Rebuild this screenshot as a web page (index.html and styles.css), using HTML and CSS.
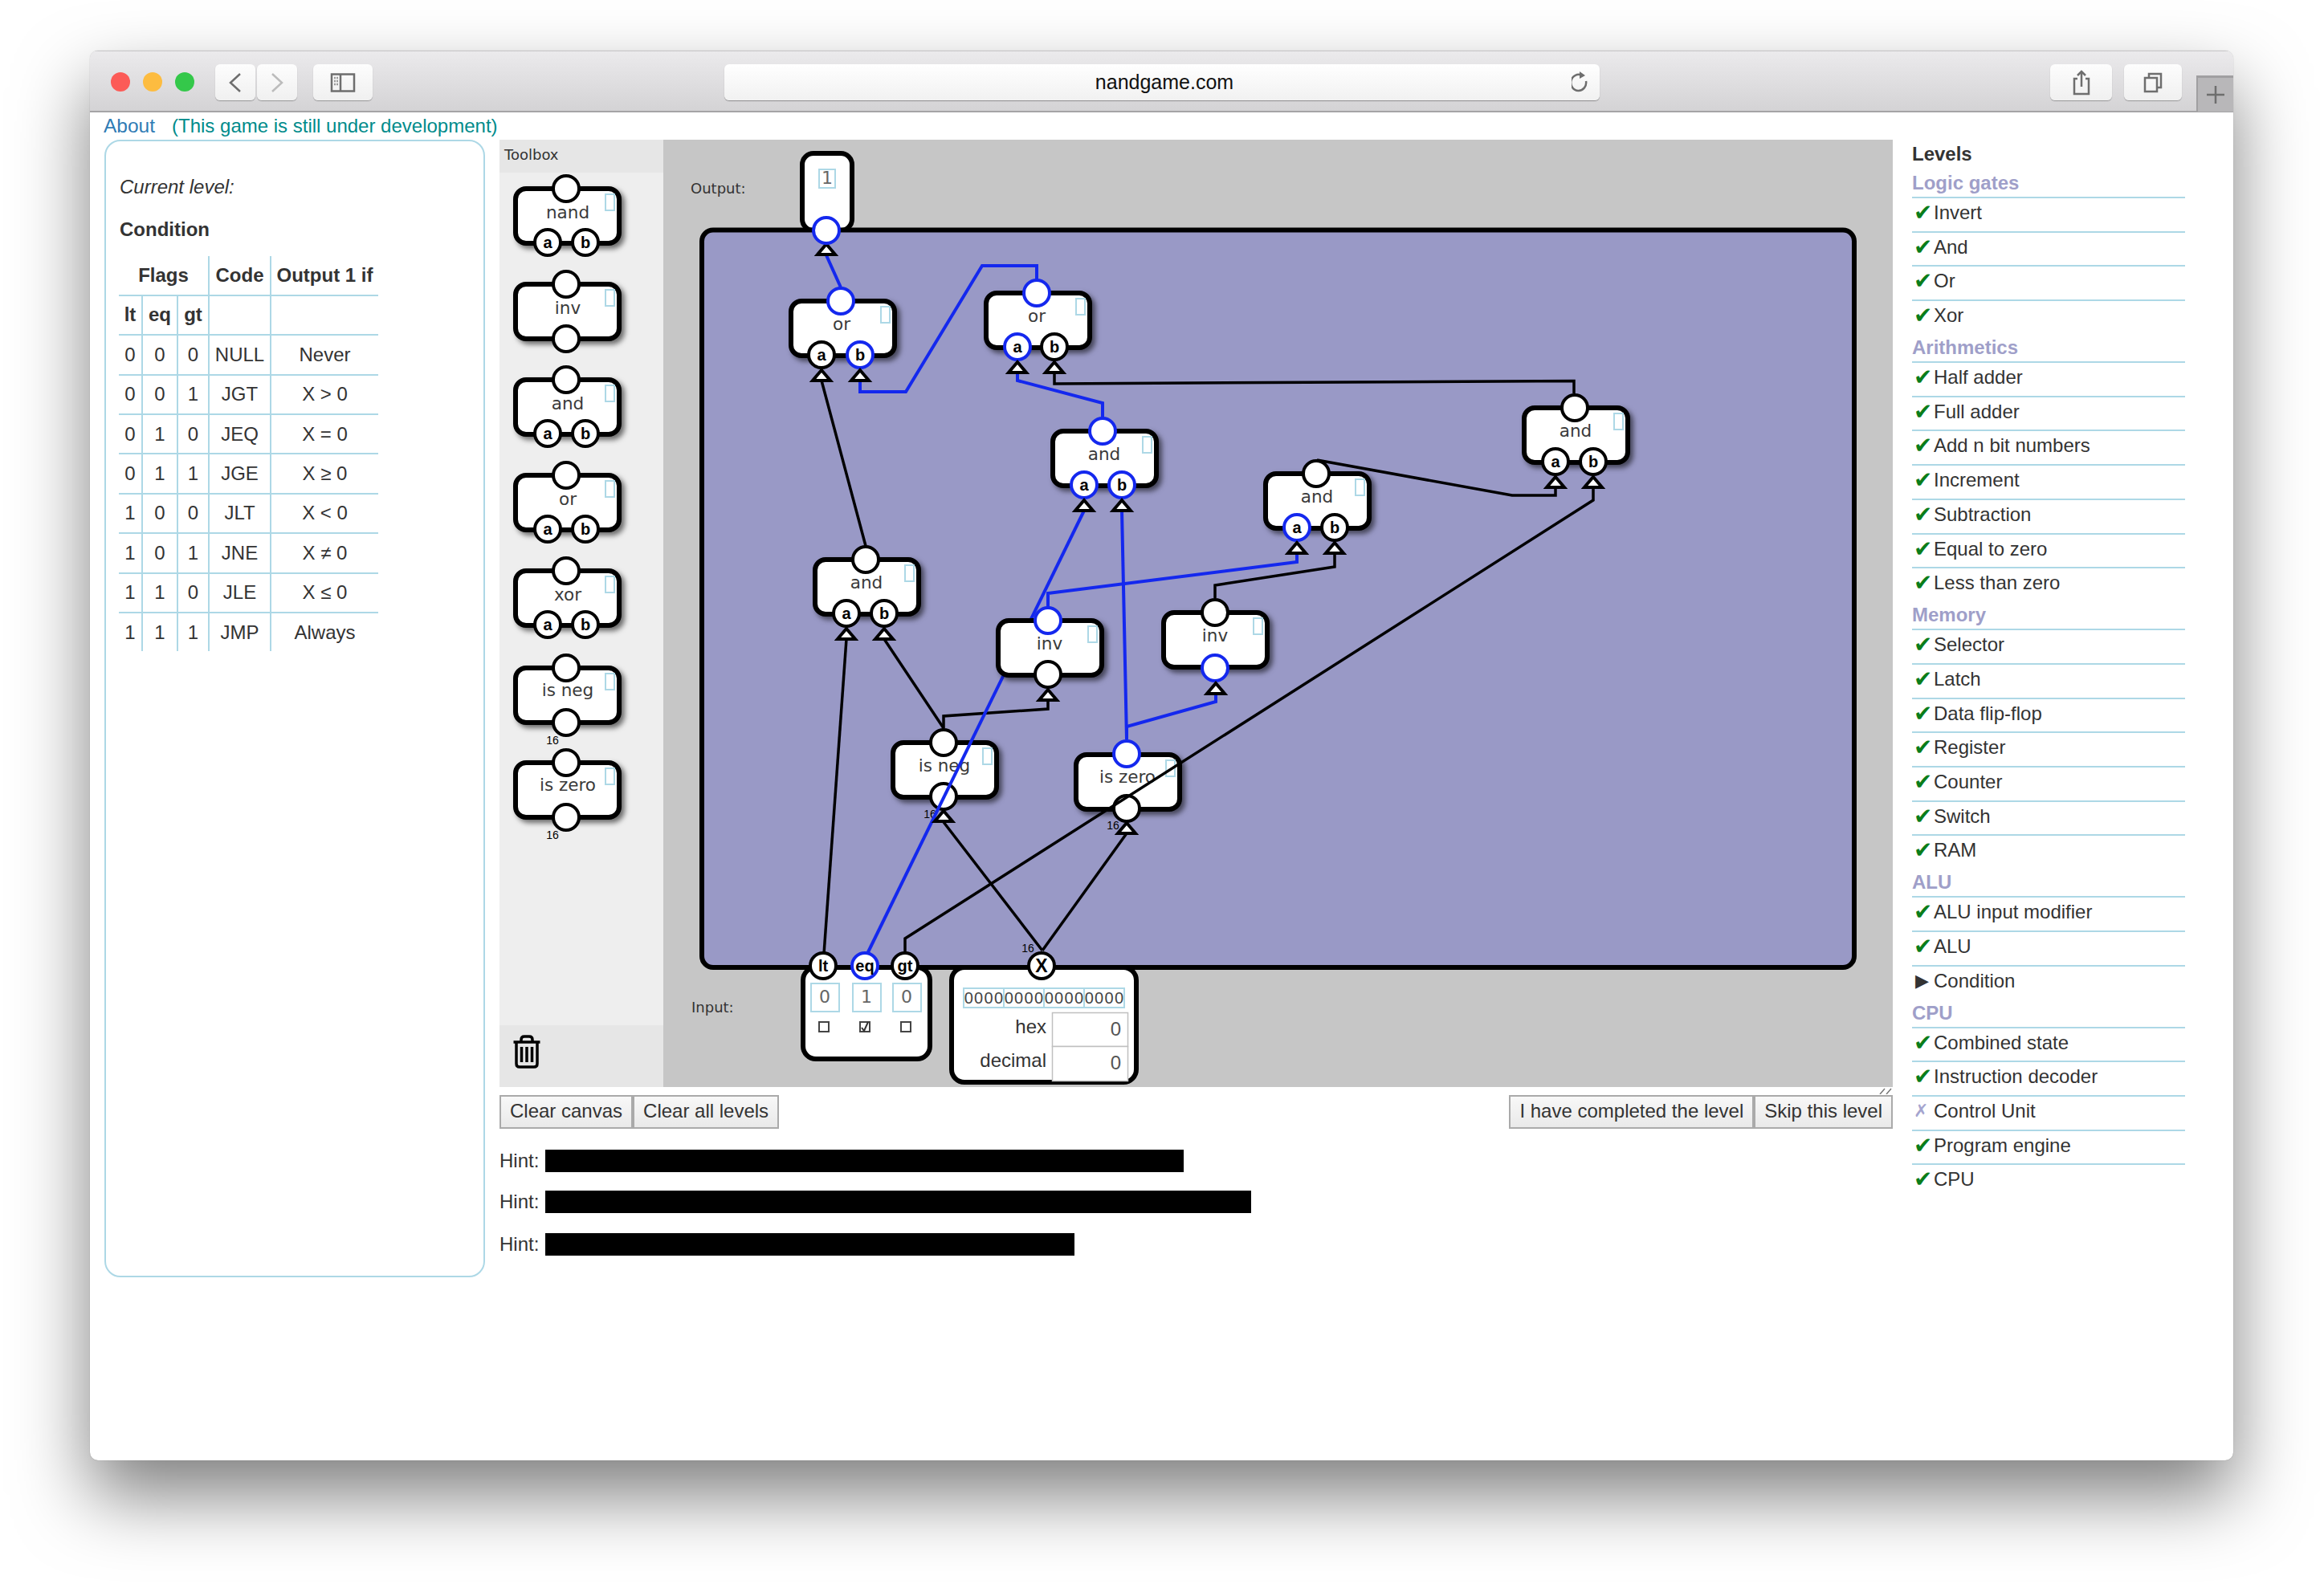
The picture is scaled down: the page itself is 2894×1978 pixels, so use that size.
FILE: index.html
```html
<!DOCTYPE html>
<html lang="en">
  <head>
    <meta charset="UTF-8" />
    <title>nandgame.com</title>
    <link rel="stylesheet" href="styles.css">
  </head>
  <body>
    <svg class="defs" width="0" height="0">
      <defs>
        <g id="gate-body">
          <rect class="gate-rect" x="3" y="3" width="129" height="68" rx="13" />
          <rect class="gate-tag" x="115" y="10" width="11" height="20" />
        </g>
        <polygon id="arrow" points="0,-13 -11,0 11,0" />
      </defs>
    </svg>

    <div class="window">
      <div class="titlebar">
        <span class="light light-red"></span>
        <span class="light light-yellow"></span>
        <span class="light light-green"></span>
        <div class="tb-btn tb-back">
          <svg width="18" height="26" viewBox="0 0 18 26"><path class="ico-dark" d="M15 2 L3 13 L15 24" /></svg>
        </div>
        <div class="tb-btn tb-forward">
          <svg width="18" height="26" viewBox="0 0 18 26"><path class="ico-light" d="M3 2 L15 13 L3 24" /></svg>
        </div>
        <div class="tb-btn tb-sidebar">
          <svg width="32" height="24" viewBox="0 0 32 24">
            <rect class="ico-dark" x="2" y="1.5" width="28" height="21" />
            <path class="ico-dark" d="M13 1.5 V22.5" />
            <path class="ico-dots" d="M5 6 H10 M5 10 H10 M5 14 H10" />
          </svg>
        </div>
        <div class="urlbar">
          <span class="url">nandgame.com</span>
          <svg class="reload" width="20" height="28" viewBox="0 0 20 28">
            <path class="ico-dark" d="M13 6 A9.5 10 0 1 0 18 13" />
            <path class="ico-fill" d="M10 1 L17 6 L10 10 Z" />
          </svg>
        </div>
        <div class="tb-btn tb-share">
          <svg width="22" height="32" viewBox="0 0 22 32">
            <path class="ico-dark" d="M6 11 H2 V30 H20 V11 H16 M11 21 V2 M6 7 L11 2 L16 7" />
          </svg>
        </div>
        <div class="tb-btn tb-tabs">
          <svg width="24" height="26" viewBox="0 0 24 26">
            <rect class="ico-dark" x="2" y="7" width="15" height="17" />
            <path class="ico-dark" d="M7 7 V2 H22 V19 H17" />
          </svg>
        </div>
        <div class="tb-newtab">
          <svg width="22" height="22" viewBox="0 0 22 22"><path class="ico-dark" d="M11 0 V22 M0 11 H22" /></svg>
        </div>
      </div>

      <div class="page">
        <div class="toplinks">
          <a class="about-link">About</a>
          <span class="dev-note">(This game is still under development)</span>
        </div>

        <div class="main">
          <div class="level-panel">
            <p class="current-label">Current level:</p>
            <p class="current-name">Condition</p>
            <table class="truth">
              <colgroup>
                <col class="c-lt" /><col class="c-eq" /><col class="c-gt" /><col class="c-code" /><col class="c-out" />
              </colgroup>
              <tr><th colspan="3">Flags</th><th>Code</th><th>Output 1 if</th></tr>
              <tr><th>lt</th><th>eq</th><th>gt</th><th></th><th></th></tr>
              <tr><td>0</td><td>0</td><td>0</td><td>NULL</td><td>Never</td></tr>
              <tr><td>0</td><td>0</td><td>1</td><td>JGT</td><td>X &gt; 0</td></tr>
              <tr><td>0</td><td>1</td><td>0</td><td>JEQ</td><td>X = 0</td></tr>
              <tr><td>0</td><td>1</td><td>1</td><td>JGE</td><td>X ≥ 0</td></tr>
              <tr><td>1</td><td>0</td><td>0</td><td>JLT</td><td>X &lt; 0</td></tr>
              <tr><td>1</td><td>0</td><td>1</td><td>JNE</td><td>X ≠ 0</td></tr>
              <tr><td>1</td><td>1</td><td>0</td><td>JLE</td><td>X ≤ 0</td></tr>
              <tr><td>1</td><td>1</td><td>1</td><td>JMP</td><td>Always</td></tr>
            </table>
          </div>

          <div class="center">
            <div class="workspace">
              <div class="toolbox">
                <div class="toolbox-head">Toolbox</div>
                <div class="toolbox-body">
                  <svg class="toolbox-svg" viewBox="622 215 204 1062" width="204" height="1062">
                    <g transform="translate(639 232)">
                      <use href="#gate-body" /><text class="gate-label" x="68" y="40">nand</text>
                      <circle class="pin" cx="66" cy="3" r="16" /><circle class="pin" cx="43" cy="70" r="16" /><circle class="pin" cx="90" cy="70" r="16" />
                      <text class="pin-label" x="43" y="77">a</text><text class="pin-label" x="90" y="77">b</text>
                    </g>
                    <g transform="translate(639 351)">
                      <use href="#gate-body" /><text class="gate-label" x="68" y="40">inv</text>
                      <circle class="pin" cx="66" cy="3" r="16" /><circle class="pin" cx="66" cy="71" r="16" />
                    </g>
                    <g transform="translate(639 470)">
                      <use href="#gate-body" /><text class="gate-label" x="68" y="40">and</text>
                      <circle class="pin" cx="66" cy="3" r="16" /><circle class="pin" cx="43" cy="70" r="16" /><circle class="pin" cx="90" cy="70" r="16" />
                      <text class="pin-label" x="43" y="77">a</text><text class="pin-label" x="90" y="77">b</text>
                    </g>
                    <g transform="translate(639 589)">
                      <use href="#gate-body" /><text class="gate-label" x="68" y="40">or</text>
                      <circle class="pin" cx="66" cy="3" r="16" /><circle class="pin" cx="43" cy="70" r="16" /><circle class="pin" cx="90" cy="70" r="16" />
                      <text class="pin-label" x="43" y="77">a</text><text class="pin-label" x="90" y="77">b</text>
                    </g>
                    <g transform="translate(639 708)">
                      <use href="#gate-body" /><text class="gate-label" x="68" y="40">xor</text>
                      <circle class="pin" cx="66" cy="3" r="16" /><circle class="pin" cx="43" cy="70" r="16" /><circle class="pin" cx="90" cy="70" r="16" />
                      <text class="pin-label" x="43" y="77">a</text><text class="pin-label" x="90" y="77">b</text>
                    </g>
                    <g transform="translate(639 829)">
                      <use href="#gate-body" /><text class="gate-label" x="68" y="38">is neg</text>
                      <circle class="pin" cx="66" cy="3" r="16" /><circle class="pin" cx="66" cy="71" r="16" />
                      <text class="bus-label" x="49" y="98">16</text>
                    </g>
                    <g transform="translate(639 947)">
                      <use href="#gate-body" /><text class="gate-label" x="68" y="38">is zero</text>
                      <circle class="pin" cx="66" cy="3" r="16" /><circle class="pin" cx="66" cy="71" r="16" />
                      <text class="bus-label" x="49" y="98">16</text>
                    </g>
                  </svg>
                </div>
                <div class="toolbox-foot">
                  <svg class="trash" width="36" height="42" viewBox="0 0 36 42">
                    <path class="trash-line" d="M1.5 9 H34.5 M11 9 V6 Q11 2 15 2 H21 Q25 2 25 6 V9" />
                    <path class="trash-line" d="M5 9 V36 Q5 40 9 40 H27 Q31 40 31 36 V9" />
                    <path class="trash-bar" d="M11.5 15 V34 M18 15 V34 M24.5 15 V34" />
                  </svg>
                </div>
              </div>

              <div class="canvas">
                <svg class="canvas-svg" viewBox="826 174 1531 1180" width="1531" height="1180">
                  <text class="side-label" x="860" y="241">Output:</text>
                  <text class="side-label" x="861" y="1261">Input:</text>

                  <rect class="io-node" x="999" y="191" width="62" height="96" rx="14" />
                  <rect class="circuit" x="874" y="286.500" width="1435" height="918.500" rx="14" />

                  <g transform="translate(1109 922)">
                    <use href="#gate-body" /><text class="gate-label" x="67" y="39">is neg</text>
                    <circle class="pin" cx="66" cy="3" r="16" /><circle class="pin" cx="66" cy="70" r="16" />
                    <text class="bus-label" x="49" y="97">16</text>
                  </g>
                  <g transform="translate(1337 937)">
                    <use href="#gate-body" /><text class="gate-label" x="67" y="38">is zero</text>
                    <circle class="pin pin-on" cx="66" cy="2" r="16" /><circle class="pin" cx="66" cy="70" r="16" />
                    <text class="bus-label" x="49" y="96">16</text>
                  </g>

                  <polyline class="wire" points="1078,680 1023,474" />
                  <polyline class="wire" points="1313,463 1313,478 1960,474.500 1960,490" />
                  <polyline class="wire" points="1640,573 1883,617 1937,617 1937,607" />
                  <polyline class="wire" points="1984,607 1984,623 1127,1169 1127,1187" />
                  <polyline class="wire" points="1513,745 1513,729 1662,706 1662,689" />
                  <polyline class="wire" points="1175,907 1175,892 1305,883 1305,872" />
                  <polyline class="wire" points="1175,907 1101,796" />
                  <polyline class="wire" points="1026,1188 1054,796" />
                  <polyline class="wire" points="1298,1184 1175,1024" />
                  <polyline class="wire" points="1298,1184 1403,1038" />

                  <polyline class="wire wire-on" points="1029,318 1047,358" />
                  <polyline class="wire wire-on" points="1071,474 1071,488 1128,488 1223,331 1291,331 1291,348" />
                  <polyline class="wire wire-on" points="1267,465 1267,474 1373,502 1373,520" />
                  <polyline class="wire wire-on" points="1079,1190 1350,636" />
                  <polyline class="wire wire-on" points="1397,636 1403,921" />
                  <polyline class="wire wire-on" points="1403,921 1403,905 1514,874 1514,864" />
                  <polyline class="wire wire-on" points="1305,757 1305,739 1615,700 1615,689" />

                  <g transform="translate(982 372)">
                    <use href="#gate-body" /><text class="gate-label" x="66" y="39">or</text>
                    <circle class="pin pin-on" cx="65" cy="3" r="16" /><circle class="pin" cx="41" cy="70" r="16" /><circle class="pin pin-on" cx="89" cy="70" r="16" />
                    <text class="pin-label" x="41" y="77">a</text><text class="pin-label" x="89" y="77">b</text>
                  </g>
                  <g transform="translate(1225 362)">
                    <use href="#gate-body" /><text class="gate-label" x="66" y="39">or</text>
                    <circle class="pin pin-on" cx="66" cy="3" r="16" /><circle class="pin pin-on" cx="42" cy="70" r="16" /><circle class="pin" cx="88" cy="70" r="16" />
                    <text class="pin-label" x="42" y="77">a</text><text class="pin-label" x="88" y="77">b</text>
                  </g>
                  <g transform="translate(1308 534)">
                    <use href="#gate-body" /><text class="gate-label" x="67" y="39">and</text>
                    <circle class="pin pin-on" cx="65" cy="3" r="16" /><circle class="pin pin-on" cx="42" cy="70" r="16" /><circle class="pin pin-on" cx="89" cy="70" r="16" />
                    <text class="pin-label" x="42" y="77">a</text><text class="pin-label" x="89" y="77">b</text>
                  </g>
                  <g transform="translate(1012 694)">
                    <use href="#gate-body" /><text class="gate-label" x="67" y="39">and</text>
                    <circle class="pin" cx="66" cy="3" r="16" /><circle class="pin" cx="42" cy="70" r="16" /><circle class="pin" cx="89" cy="70" r="16" />
                    <text class="pin-label" x="42" y="77">a</text><text class="pin-label" x="89" y="77">b</text>
                  </g>
                  <g transform="translate(1573 587)">
                    <use href="#gate-body" /><text class="gate-label" x="67" y="39">and</text>
                    <circle class="pin" cx="66" cy="3" r="16" /><circle class="pin pin-on" cx="42" cy="70" r="16" /><circle class="pin" cx="89" cy="70" r="16" />
                    <text class="pin-label" x="42" y="77">a</text><text class="pin-label" x="89" y="77">b</text>
                  </g>
                  <g transform="translate(1895 505)">
                    <use href="#gate-body" /><text class="gate-label" x="67" y="39">and</text>
                    <circle class="pin" cx="66" cy="3" r="16" /><circle class="pin" cx="42" cy="70" r="16" /><circle class="pin" cx="89" cy="70" r="16" />
                    <text class="pin-label" x="42" y="77">a</text><text class="pin-label" x="89" y="77">b</text>
                  </g>
                  <g transform="translate(1240 770)">
                    <use href="#gate-body" /><text class="gate-label" x="67" y="39">inv</text>
                    <circle class="pin pin-on" cx="65" cy="3" r="16" /><circle class="pin" cx="65" cy="70" r="16" />
                  </g>
                  <g transform="translate(1446 760)">
                    <use href="#gate-body" /><text class="gate-label" x="67" y="39">inv</text>
                    <circle class="pin" cx="67" cy="3" r="16" /><circle class="pin pin-on" cx="67" cy="72" r="16" />
                  </g>

                  <use class="arrow" href="#arrow" x="1029" y="317" />
                  <use class="arrow" href="#arrow" x="1023" y="474" />
                  <use class="arrow" href="#arrow" x="1071" y="474" />
                  <use class="arrow" href="#arrow" x="1267" y="464" />
                  <use class="arrow" href="#arrow" x="1313" y="464" />
                  <use class="arrow" href="#arrow" x="1350" y="636" />
                  <use class="arrow" href="#arrow" x="1397" y="636" />
                  <use class="arrow" href="#arrow" x="1054" y="796" />
                  <use class="arrow" href="#arrow" x="1101" y="796" />
                  <use class="arrow" href="#arrow" x="1615" y="689" />
                  <use class="arrow" href="#arrow" x="1662" y="689" />
                  <use class="arrow" href="#arrow" x="1937" y="607" />
                  <use class="arrow" href="#arrow" x="1984" y="607" />
                  <use class="arrow" href="#arrow" x="1305" y="872" />
                  <use class="arrow" href="#arrow" x="1514" y="864" />
                  <use class="arrow" href="#arrow" x="1175" y="1023" />
                  <use class="arrow" href="#arrow" x="1403" y="1038" />

                  <rect class="value-box" x="1020" y="211" width="20" height="23" />
                  <text class="value" x="1030" y="229">1</text>
                  <circle class="pin pin-on" cx="1029" cy="287" r="16" />

                  <rect class="io-node" x="1000" y="1205" width="158" height="114" rx="16" />
                  <circle class="pin" cx="1025" cy="1203" r="16" />
                  <circle class="pin pin-on" cx="1077" cy="1203" r="16" />
                  <circle class="pin" cx="1127" cy="1203" r="16" />
                  <text class="pin-label" x="1025" y="1210">lt</text>
                  <text class="pin-label" x="1077" y="1210">eq</text>
                  <text class="pin-label" x="1127" y="1210">gt</text>
                  <rect class="value-box" x="1010" y="1225" width="35" height="35" />
                  <rect class="value-box" x="1062" y="1225" width="35" height="35" />
                  <rect class="value-box" x="1112" y="1225" width="35" height="35" />
                  <text class="value" x="1027" y="1249">0</text>
                  <text class="value" x="1079" y="1249">1</text>
                  <text class="value" x="1129" y="1249">0</text>
                  <rect class="check" x="1020" y="1273" width="12" height="12" />
                  <rect class="check" x="1071" y="1273" width="12" height="12" />
                  <path class="check-mark" d="M1073 1280 L1076 1284 L1081 1273" />
                  <rect class="check" x="1122" y="1273" width="12" height="12" />

                  <rect class="io-node" x="1185" y="1205" width="230" height="143" rx="16" />
                  <circle class="pin" cx="1297" cy="1203" r="16" />
                  <text class="pin-label pin-label-x" x="1297" y="1211">X</text>
                  <text class="bus-label" x="1280" y="1186">16</text>
                  <rect class="value-box" x="1200" y="1231" width="200" height="24" />
                  <path class="value-div" d="M1250 1231 V1255 M1300 1231 V1255 M1350 1231 V1255" />
                  <text class="bits" x="1225.500" y="1250">0000</text>
                  <text class="bits" x="1275.500" y="1250">0000</text>
                  <text class="bits" x="1325.500" y="1250">0000</text>
                  <text class="bits" x="1375.500" y="1250">0000</text>
                  <text class="num-label" x="1303" y="1287">hex</text>
                  <text class="num-label" x="1303" y="1329">decimal</text>
                  <rect class="num-cell" x="1310.500" y="1261.500" width="94" height="42" />
                  <rect class="num-cell" x="1310.500" y="1303.500" width="94" height="43" />
                  <text class="num-value" x="1396" y="1290">0</text>
                  <text class="num-value" x="1396" y="1332">0</text>
                </svg>
                <svg class="grip" width="16" height="8" viewBox="0 0 16 8">
                  <path class="grip-line" d="M1 8 L7 1 M9 8 L15 1" />
                </svg>
              </div>
            </div>

            <div class="actions">
              <div class="btn-group">
                <button class="btn">Clear canvas</button><button class="btn">Clear all levels</button>
              </div>
              <div class="btn-group">
                <button class="btn">I have completed the level</button><button class="btn">Skip this level</button>
              </div>
            </div>

            <p class="hint hint-1">Hint: <span class="redact redact-1"></span></p>
            <p class="hint hint-2">Hint: <span class="redact redact-2"></span></p>
            <p class="hint hint-3">Hint: <span class="redact redact-3"></span></p>
          </div>

          <div class="levels">
            <h3 class="levels-title">Levels</h3>
            <div class="group-name">Logic gates</div>
            <div class="level"><span class="mark done">✔</span>Invert</div>
            <div class="level"><span class="mark done">✔</span>And</div>
            <div class="level"><span class="mark done">✔</span>Or</div>
            <div class="level"><span class="mark done">✔</span>Xor</div>
            <div class="group-name">Arithmetics</div>
            <div class="level"><span class="mark done">✔</span>Half adder</div>
            <div class="level"><span class="mark done">✔</span>Full adder</div>
            <div class="level"><span class="mark done">✔</span>Add n bit numbers</div>
            <div class="level"><span class="mark done">✔</span>Increment</div>
            <div class="level"><span class="mark done">✔</span>Subtraction</div>
            <div class="level"><span class="mark done">✔</span>Equal to zero</div>
            <div class="level"><span class="mark done">✔</span>Less than zero</div>
            <div class="group-name">Memory</div>
            <div class="level"><span class="mark done">✔</span>Selector</div>
            <div class="level"><span class="mark done">✔</span>Latch</div>
            <div class="level"><span class="mark done">✔</span>Data flip-flop</div>
            <div class="level"><span class="mark done">✔</span>Register</div>
            <div class="level"><span class="mark done">✔</span>Counter</div>
            <div class="level"><span class="mark done">✔</span>Switch</div>
            <div class="level"><span class="mark done">✔</span>RAM</div>
            <div class="group-name">ALU</div>
            <div class="level"><span class="mark done">✔</span>ALU input modifier</div>
            <div class="level"><span class="mark done">✔</span>ALU</div>
            <div class="level"><span class="mark current">▶</span>Condition</div>
            <div class="group-name">CPU</div>
            <div class="level"><span class="mark done">✔</span>Combined state</div>
            <div class="level"><span class="mark done">✔</span>Instruction decoder</div>
            <div class="level"><span class="mark skipped">✗</span>Control Unit</div>
            <div class="level"><span class="mark done">✔</span>Program engine</div>
            <div class="level"><span class="mark done">✔</span>CPU</div>
          </div>
        </div>
      </div>
    </div>
  </body>
</html>
```

FILE: styles.css
```css
html,
body {
  margin: 0;
  padding: 0;
  height: 100%;
  background: #fff;
  overflow: hidden;
}
body {
  padding: 63px 113px 0 112px;
  box-sizing: border-box;
  font-family: "Liberation Sans", Arial, sans-serif;
  font-size: 24px;
  color: #333;
}
.defs {
  position: absolute;
}
.window {
  width: 2669px;
  height: 1756px;
  background: #fff;
  border-radius: 10px;
  overflow: hidden;
  box-shadow: 0 0 1px rgba(0, 0, 0, 0.4), 0 44px 90px rgba(0, 0, 0, 0.5);
}

/* browser chrome */
.titlebar {
  display: flex;
  align-items: flex-start;
  box-sizing: border-box;
  height: 77px;
  padding: 16px 0 0 26px;
  background: linear-gradient(#ebeaec, #d4d3d5);
  border-top: 1px solid #c9c8ca;
  border-bottom: 2px solid #a5a4a6;
}
.light {
  width: 24px;
  height: 24px;
  margin: 10px 16px 0 0;
  border-radius: 50%;
}
.light-red {
  background: #fc5b57;
}
.light-yellow {
  background: #fdbc40;
}
.light-green {
  background: #34c84a;
  margin-right: 26px;
}
.tb-btn {
  display: flex;
  align-items: center;
  justify-content: center;
  box-sizing: border-box;
  height: 45px;
  background: linear-gradient(#fdfdfd, #f0f0f0);
  border-radius: 6px;
  box-shadow: 0 1px 1px rgba(0, 0, 0, 0.3);
}
.tb-back {
  width: 50px;
  margin-right: 2px;
}
.tb-forward {
  width: 50px;
  margin-right: 20px;
}
.tb-sidebar {
  width: 74px;
  margin-right: 438px;
}
.urlbar {
  position: relative;
  display: flex;
  align-items: center;
  justify-content: center;
  box-sizing: border-box;
  width: 1090px;
  height: 45px;
  margin-right: 561px;
  padding-left: 6px;
  background: linear-gradient(#ffffff, #f1f1f1);
  border-radius: 6px;
  box-shadow: 0 1px 1px rgba(0, 0, 0, 0.35);
}
.url {
  font-size: 25px;
  color: #111;
}
.reload {
  position: absolute;
  right: 15px;
  top: 8px;
}
.tb-share {
  width: 77px;
  margin-right: 15px;
}
.tb-tabs {
  width: 72px;
  margin-right: 18px;
}
.tb-newtab {
  display: flex;
  align-items: center;
  justify-content: center;
  box-sizing: border-box;
  width: 46px;
  height: 45px;
  margin-top: 14px;
  background: #b8b7b9;
  border-top: 3px solid #a09fa1;
  border-left: 2px solid #a09fa1;
}
.ico-dark,
.ico-light,
.ico-dots {
  fill: none;
  stroke-width: 2.500;
}
.ico-dark {
  stroke: #6e6e6e;
}
.ico-light {
  stroke: #bcbcbc;
}
.ico-dots {
  stroke: #999;
  stroke-dasharray: 2 1;
}
.ico-fill {
  fill: #6e6e6e;
}

/* page */
.page {
  height: 1679px;
}
.toplinks {
  display: flex;
  align-items: center;
  height: 33px;
  padding-bottom: 1px;
  padding-left: 17px;
}
.about-link {
  color: #2f7cb5;
  font-size: 24.500px;
  margin-right: 21px;
}
.dev-note {
  color: #008b8b;
}
.main {
  display: flex;
  align-items: flex-start;
  padding-left: 18px;
}
.level-panel {
  box-sizing: border-box;
  width: 474px;
  height: 1417px;
  margin-right: 18px;
  padding: 43px 16px 0 17px;
  border: 2px solid #add8e6;
  border-radius: 20px;
}
.current-label {
  margin: 0;
  font-style: italic;
  font-size: 24px;
  line-height: 28px;
}
.current-name {
  margin: 25px 0 19px;
  font-weight: bold;
  font-size: 24px;
  line-height: 28px;
}
.truth {
  border-collapse: collapse;
  table-layout: fixed;
  width: 323px;
  margin-left: -1px;
}
.c-lt {
  width: 29px;
}
.c-eq {
  width: 44px;
}
.c-gt {
  width: 39px;
}
.c-code {
  width: 77px;
}
.c-out {
  width: 134px;
}
.truth th,
.truth td {
  padding: 0;
  text-align: center;
  border-left: 2px solid #add8e6;
  border-bottom: 2px solid #add8e6;
}
.truth th {
  height: 47.600px;
}
.truth td {
  height: 47.400px;
}
.truth th:first-child,
.truth td:first-child {
  border-left: none;
}
.truth tr:last-child td {
  border-bottom: none;
}

.center {
  width: 1735px;
  margin-right: 24px;
}
.workspace {
  display: flex;
  height: 1180px;
}
.toolbox {
  display: flex;
  flex-direction: column;
  width: 204px;
  background: #eeeeee;
}
.toolbox-head {
  height: 41px;
  padding: 8px 0 0 6px;
  box-sizing: border-box;
  font-family: "DejaVu Sans", sans-serif;
  font-size: 18px;
  background: #e6e6e6;
}
.toolbox-body {
  height: 1062px;
}
.toolbox-svg,
.canvas-svg {
  display: block;
}
.toolbox-foot {
  height: 77px;
  padding: 12px 0 0 16px;
  box-sizing: border-box;
  background: #e6e6e6;
}
.trash-line {
  fill: none;
  stroke: #000;
  stroke-width: 3.500;
}
.trash-bar {
  fill: none;
  stroke: #000;
  stroke-width: 3.500;
}
.canvas {
  position: relative;
  width: 1531px;
  background: #c6c6c6;
}
.grip {
  position: absolute;
  right: 1px;
  bottom: -9px;
}
.grip-line {
  fill: none;
  stroke: #777;
  stroke-width: 1.500;
}

/* diagram parts */
.circuit {
  fill: #9999c6;
  stroke: #000;
  stroke-width: 6;
}
.gate-rect {
  fill: #fff;
  stroke: #000;
  stroke-width: 6;
  filter: drop-shadow(4px 4px 3px rgba(0, 0, 0, 0.55));
}
.gate-tag {
  fill: #fff;
  stroke: #add8e6;
  stroke-width: 2;
}
.gate-label {
  font-family: "DejaVu Sans", sans-serif;
  font-size: 21.500px;
  fill: #3a3a3a;
  text-anchor: middle;
}
.pin {
  fill: #fff;
  stroke: #000;
  stroke-width: 4;
}
.pin-on {
  stroke: #1428ee;
}
.pin-label {
  font-family: "Liberation Sans", sans-serif;
  font-weight: bold;
  font-size: 20px;
  fill: #000;
  text-anchor: middle;
}
.pin-label-x {
  font-size: 23px;
}
.bus-label {
  font-family: "Liberation Sans", sans-serif;
  font-size: 14px;
  fill: #000;
  text-anchor: middle;
}
.wire {
  fill: none;
  stroke: #000;
  stroke-width: 3.500;
}
.wire-on {
  stroke: #1428ee;
  stroke-width: 4;
}
.arrow {
  fill: #fff;
  stroke: #000;
  stroke-width: 4;
}
.side-label {
  font-family: "DejaVu Sans", sans-serif;
  font-size: 18px;
  fill: #333;
}
.io-node {
  fill: #fff;
  stroke: #000;
  stroke-width: 6;
}
.value-box {
  fill: #fff;
  stroke: #add8e6;
  stroke-width: 2;
}
.value-div {
  fill: none;
  stroke: #add8e6;
  stroke-width: 2;
}
.value {
  font-family: "DejaVu Sans", sans-serif;
  font-size: 22px;
  fill: #666;
  text-anchor: middle;
}
.bits {
  font-family: "Liberation Sans", sans-serif;
  font-size: 20px;
  letter-spacing: 1.300px;
  fill: #444;
  text-anchor: middle;
}
.check {
  fill: #fff;
  stroke: #444;
  stroke-width: 2;
}
.check-mark {
  fill: none;
  stroke: #333;
  stroke-width: 2;
}
.num-label {
  font-family: "Liberation Sans", sans-serif;
  font-size: 24px;
  fill: #333;
  text-anchor: end;
}
.num-cell {
  fill: #fff;
  stroke: #c0c0c0;
  stroke-width: 1.500;
}
.num-value {
  font-family: "Liberation Sans", sans-serif;
  font-size: 24px;
  fill: #555;
  text-anchor: end;
}

/* controls under the canvas */
.actions {
  display: flex;
  justify-content: space-between;
  margin-top: 10px;
}
.btn-group {
  display: flex;
}
.btn {
  height: 42px;
  padding: 0 11px 2px;
  font-family: "Liberation Sans", Arial, sans-serif;
  font-size: 24px;
  color: #333;
  background: linear-gradient(#f8f8f8, #e9e9e9);
  border: 2px solid #aaa;
  border-radius: 0;
}
.hint {
  display: flex;
  align-items: center;
  gap: 8px;
  height: 28px;
  margin: 0;
}
.hint-1 {
  margin-top: 26px;
}
.hint-2 {
  margin-top: 23px;
}
.hint-3 {
  margin-top: 25px;
}
.redact {
  height: 28px;
  background: #000;
}
.redact-1 {
  width: 795px;
}
.redact-2 {
  width: 879px;
}
.redact-3 {
  width: 659px;
}

/* level list */
.levels {
  width: 340px;
  padding-top: 4px;
}
.levels-title {
  margin: 0 0 5px;
  font-size: 24px;
  line-height: 28px;
}
.group-name {
  box-sizing: border-box;
  height: 36px;
  padding-top: 3px;
  line-height: 28px;
  font-weight: bold;
  color: #9f9fc9;
  border-bottom: 2px solid #add8e6;
}
.level {
  display: flex;
  box-sizing: border-box;
  height: 42.700px;
  padding-top: 4px;
  line-height: 28px;
  border-bottom: 2px solid #add8e6;
}
.level:has(+ .group-name),
.level:last-child {
  border-bottom: none;
  height: 41px;
}
.mark {
  flex: none;
  width: 27px;
  padding-left: 2px;
  box-sizing: border-box;
  font-family: "DejaVu Sans", sans-serif;
  font-size: 28px;
}
.done {
  color: #0a7d1a;
}
.current {
  color: #333;
  font-size: 22px;
  padding-left: 4px;
}
.skipped {
  color: #a5a5cf;
  font-size: 22px;
}
```
